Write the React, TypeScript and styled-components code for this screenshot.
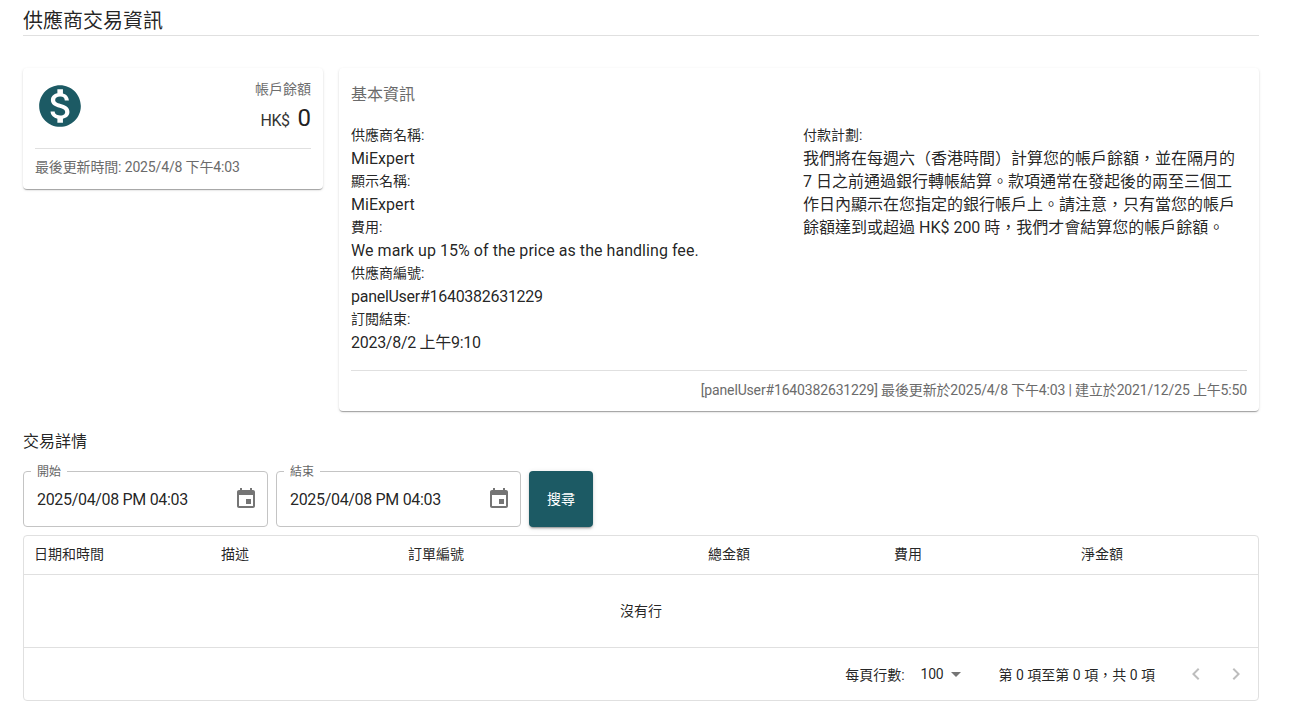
import React from 'react'
import styled, { createGlobalStyle } from 'styled-components'

const GlobalStyle = createGlobalStyle`
  html, body { margin: 0; padding: 0; background: #fff; }
  body {
    font-family: Roboto, "Noto Sans CJK TC", sans-serif;
    color: rgba(0, 0, 0, 0.87);
    overflow: hidden;
  }
`

const CalendarIcon = () => (
  <svg width="24" height="24" viewBox="0 0 24 24" fill="#757575">
    <path d="M17 12h-5v5h5v-5zM16 1v2H8V1H6v2H5c-1.11 0-1.99.9-1.99 2L3 19c0 1.1.89 2 2 2h14c1.1 0 2-.9 2-2V5c0-1.1-.9-2-2-2h-1V1h-2zm3 18H5V8h14v11z" />
  </svg>
)

const DollarIcon = () => (
  <svg width="50" height="50" viewBox="0 0 24 24" fill="#1c5a64">
    <path d="M12 2C6.48 2 2 6.48 2 12s4.48 10 10 10 10-4.48 10-10S17.52 2 12 2zm1.41 16.09V20h-2.67v-1.93c-1.71-.36-3.16-1.46-3.27-3.4h1.96c.1 1.05.82 1.87 2.65 1.87 1.96 0 2.4-.98 2.4-1.59 0-.83-.44-1.61-2.67-2.14-2.48-.6-4.18-1.62-4.18-3.67 0-1.72 1.39-2.84 3.11-3.21V4h2.67v1.95c1.86.45 2.79 1.86 2.85 3.39H14.3c-.05-1.11-.64-1.87-2.22-1.87-1.5 0-2.4.68-2.4 1.64 0 .84.65 1.39 2.67 1.91s4.18 1.39 4.18 3.91c-.01 1.83-1.38 2.83-3.12 3.16z" />
  </svg>
)

const Chevron = ({ dir }: { dir: 'left' | 'right' }) => (
  <svg width="24" height="24" viewBox="0 0 24 24" fill="rgba(0,0,0,0.26)">
    <path d={dir === 'left' ? 'M15.41 7.41 14 6l-6 6 6 6 1.41-1.41L10.83 12z' : 'M10 6 8.59 7.41 13.17 12l-4.58 4.59L10 18l6-6z'} />
  </svg>
)

const fields = [
  { label: '供應商名稱:', value: 'MiExpert', numeric: false },
  { label: '顯示名稱:', value: 'MiExpert', numeric: false },
  { label: '費用:', value: 'We mark up 15% of the price as the handling fee.', numeric: false },
  { label: '供應商編號:', value: 'panelUser#1640382631229', numeric: true },
  { label: '訂閱結束:', value: '2023/8/2 上午9:10', numeric: true },
]

const columns = [
  ['日期和時間', 187],
  ['描述', 187],
  ['訂單編號', 300],
  ['總金額', 186],
  ['費用', 187],
  ['淨金額', 187],
] as const

const App = () => {
  return (
    <Page>
      <GlobalStyle />
      <Title>供應商交易資訊</Title>
      <TopRow>
        <BalanceCard>
          <BalanceTop>
            <IconSlot>
              <DollarIcon />
            </IconSlot>
            <BalanceText>
              <BalanceLabel>帳戶餘額</BalanceLabel>
              <BalanceAmount>
                <Currency>HK$</Currency>
                <Amount>0</Amount>
              </BalanceAmount>
            </BalanceText>
          </BalanceTop>
          <CardFooter>最後更新時間: 2025/4/8 下午4:03</CardFooter>
        </BalanceCard>
        <InfoCard>
          <InfoTitle>基本資訊</InfoTitle>
          <InfoColumns>
            <div>
              {fields.map(f => (
                <div key={f.label}>
                  <FieldLabel>{f.label}</FieldLabel>
                  <FieldValue $numeric={f.numeric}>{f.value}</FieldValue>
                </div>
              ))}
            </div>
            <div>
              <FieldLabel>付款計劃:</FieldLabel>
              <PlanText>
                我們將在每週六（香港時間）計算您的帳戶餘額，並在隔月的 7 日之前通過銀行轉帳結算。款項通常在發起後的兩至三個工作日內顯示在您指定的銀行帳戶上。請注意，只有當您的帳戶餘額達到或超過 HK$ 200 時，我們才會結算您的帳戶餘額。
              </PlanText>
            </div>
          </InfoColumns>
          <InfoFooter>[panelUser#1640382631229] 最後更新於2025/4/8 下午4:03 | 建立於2021/12/25 上午5:50</InfoFooter>
        </InfoCard>
      </TopRow>
      <SectionTitle>交易詳情</SectionTitle>
      <FilterRow>
        <DateField>
          <DateLabel>開始</DateLabel>
          <DateValue>2025/04/08 PM 04:03</DateValue>
          <CalendarIcon />
        </DateField>
        <DateField>
          <DateLabel>結束</DateLabel>
          <DateValue>2025/04/08 PM 04:03</DateValue>
          <CalendarIcon />
        </DateField>
        <SearchButton>搜尋</SearchButton>
      </FilterRow>
      <Grid>
        <HeaderRow>
          {columns.map(([name, width]) => (
            <HeaderCell key={name} $width={width}>{name}</HeaderCell>
          ))}
        </HeaderRow>
        <EmptyRow>沒有行</EmptyRow>
        <Pagination>
          <PagerText>每頁行數:</PagerText>
          <PageSize>100<Caret /></PageSize>
          <PagerText>第 0 項至第 0 項，共 0 項</PagerText>
          <PagerButtons>
            <Chevron dir="left" />
            <Chevron dir="right" />
          </PagerButtons>
        </Pagination>
      </Grid>
    </Page>
  )
}

export default App

const Page = styled.div`
  width: 1236px;
  margin-left: 23px;
  padding-top: 8px;
`

const Title = styled.div`
  font-size: 20px;
  line-height: 27px;
  height: 27px;
  border-bottom: 1px solid #e0e0e0;
`

const TopRow = styled.div`
  display: flex;
  align-items: flex-start;
  gap: 16px;
  margin-top: 32px;
`

const Card = styled.div`
  background: #fff;
  border-radius: 4px;
  box-shadow: 0 2px 1px -1px rgba(0, 0, 0, 0.2), 0 1px 1px 0 rgba(0, 0, 0, 0.14), 0 1px 3px 0 rgba(0, 0, 0, 0.12);
`

const BalanceCard = styled(Card)`
  width: 300px;
  height: 121px;
  padding: 12px;
  box-sizing: border-box;
  flex: none;
`

const BalanceTop = styled.div`
  display: flex;
  justify-content: space-between;
  height: 68px;
  border-bottom: 1px solid #e0e0e0;
`

const IconSlot = styled.div`
  padding-top: 1px;
`

const BalanceText = styled.div`
  text-align: right;
`

const BalanceLabel = styled.div`
  font-size: 14px;
  line-height: 18px;
  color: #6e6e6e;
`

const BalanceAmount = styled.div`
  display: flex;
  justify-content: flex-end;
  align-items: baseline;
  gap: 8px;
  margin-top: 2px;
`

const Currency = styled.span`
  font-size: 16px;
  letter-spacing: -0.5px;
  color: #333;
`

const Amount = styled.span`
  font-size: 24px;
  line-height: 36px;
  color: #222;
`

const CardFooter = styled.div`
  font-size: 14px;
  line-height: 20px;
  letter-spacing: -0.15px;
  margin-top: 8px;
  color: #6b6b6b;
`

const InfoCard = styled(Card)`
  flex: 1;
  height: 343px;
  padding: 12px;
  box-sizing: border-box;
  display: flex;
  flex-direction: column;
`

const InfoTitle = styled.div`
  font-size: 16px;
  line-height: 30px;
  color: #6b6b6b;
`

const InfoColumns = styled.div`
  display: grid;
  grid-template-columns: 452px 1fr;
  margin-top: 17px;
  flex: 1;
`

const FieldLabel = styled.div`
  font-size: 14px;
  line-height: 16px;
  height: 18px;
`

const FieldValue = styled.div<{ $numeric: boolean }>`
  font-size: 16px;
  line-height: 28px;
  letter-spacing: ${p => (p.$numeric ? '-0.28px' : '0.05px')};
`

const PlanText = styled.div`
  font-size: 16px;
  line-height: 23px;
  margin-top: 2px;
`

const InfoFooter = styled.div`
  border-top: 1px solid #e0e0e0;
  font-size: 14px;
  line-height: 18px;
  letter-spacing: -0.155px;
  padding-top: 10px;
  text-align: right;
  color: #6b6b6b;
`

const SectionTitle = styled.div`
  font-size: 16px;
  line-height: 21px;
  margin-top: 20px;
`

const FilterRow = styled.div`
  display: flex;
  gap: 8px;
  margin-top: 19px;
`

const DateField = styled.div`
  position: relative;
  width: 245px;
  height: 56px;
  box-sizing: border-box;
  border: 1px solid #c4c4c4;
  border-radius: 4px;
  display: flex;
  align-items: center;
  justify-content: space-between;
  padding: 0 9px 0 13px;
`

const DateLabel = styled.span`
  position: absolute;
  left: 7px;
  top: -7px;
  background: #fff;
  padding: 0 6px;
  font-size: 12px;
  line-height: 14px;
  color: #666;
`

const DateValue = styled.span`
  font-size: 16px;
  letter-spacing: -0.32px;
`

const SearchButton = styled.button`
  width: 64px;
  height: 56px;
  border: 0;
  border-radius: 4px;
  padding: 0 0 2px;
  background: #1c5a64;
  color: #fff;
  font: inherit;
  font-size: 14px;
  box-shadow: 0 3px 1px -2px rgba(0, 0, 0, 0.2), 0 2px 2px 0 rgba(0, 0, 0, 0.14), 0 1px 5px 0 rgba(0, 0, 0, 0.12);
`

const Grid = styled.div`
  margin-top: 8px;
  border: 1px solid #e0e0e0;
  border-radius: 4px;
  font-size: 14px;
`

const HeaderRow = styled.div`
  display: flex;
  height: 38px;
  align-items: center;
  border-bottom: 1px solid #e0e0e0;
`

const HeaderCell = styled.div<{ $width: number }>`
  width: ${p => p.$width}px;
  padding-left: 10px;
  padding-bottom: 4px;
  box-sizing: border-box;
`

const EmptyRow = styled.div`
  height: 73px;
  box-sizing: border-box;
  padding-bottom: 2px;
  display: flex;
  align-items: center;
  justify-content: center;
  border-bottom: 1px solid #e0e0e0;
`

const Pagination = styled.div`
  height: 52px;
  display: flex;
  align-items: center;
  justify-content: flex-end;
  padding-right: 10px;
`

const PagerText = styled.span`
  font-size: 14px;
`

const PageSize = styled.span`
  display: flex;
  align-items: center;
  gap: 7px;
  margin: 0 38px 0 16px;
  letter-spacing: -0.2px;
`

const Caret = styled.span`
  width: 0;
  height: 0;
  border-left: 5px solid transparent;
  border-right: 5px solid transparent;
  border-top: 5px solid #757575;
`

const PagerButtons = styled.div`
  display: flex;
  gap: 16px;
  margin-left: 29px;
`
